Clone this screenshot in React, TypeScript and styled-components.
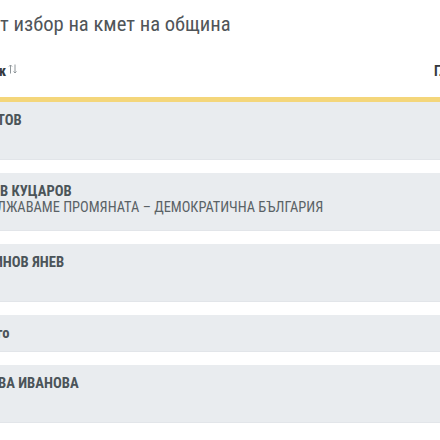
import React from "react";
import styled, { createGlobalStyle } from "styled-components";

const Global = createGlobalStyle`
  html, body { margin: 0; padding: 0; background: #ffffff; overflow: hidden; }
  body { font-family: "Roboto Condensed", Roboto, "Liberation Sans", sans-serif; }
`;

const Page = styled.div`
  width: 440px;
  height: 440px;
  overflow: hidden;
  display: flex;
  flex-direction: column;
`;

const Title = styled.h1`
  margin: 10px 0 0;
  font-size: 20.6px;
  line-height: 28px;
  font-weight: 400;
  color: #505559;
  white-space: nowrap;
`;

const Header = styled.div`
  display: grid;
  grid-template-columns: 434px 140px;
  padding: 24px 0 17px;
  line-height: 18px;
  font-size: 14px;
  font-weight: 700;
  color: #343a3e;
  white-space: nowrap;
`;

const HeadCell = styled.div<{ $cut?: number }>`
  display: flex;
  align-items: center;
  gap: 2px;
  margin-left: ${(p) => -(p.$cut ?? 0)}px;
`;

const SortIcon = styled.svg`
  width: 10px;
  height: 10px;
  transform: translateY(-2px);
  flex: none;
`;

const Accent = styled.div`
  height: 5px;
  background: #f4d67a;
`;

const List = styled.div`
  display: flex;
  flex-direction: column;
  gap: 13px;
`;

const Row = styled.div<{ $compact?: boolean }>`
  height: ${(p) => (p.$compact ? 37 : 58)}px;
  box-sizing: border-box;
  padding-top: 9px;
  background: #e9ecef;
  border-bottom: 1px solid #e2e5e9;
  overflow: hidden;
  white-space: nowrap;
`;

const Name = styled.div<{ $cut?: number }>`
  margin-left: ${(p) => -(p.$cut ?? 0)}px;
  font-size: 14.6px;
  line-height: 18px;
  font-weight: 700;
  color: #4b5459;
`;

const Party = styled.div<{ $cut?: number }>`
  margin-left: ${(p) => -(p.$cut ?? 0)}px;
  font-size: 14.4px;
  line-height: 16px;
  font-weight: 400;
  color: #5a6266;
`;

type Cand = { name: string; cut: number; party?: string; partyCut?: number; compact?: boolean };

const candidates: Cand[] = [
  { name: "ТОВ", cut: 3, party: "" },
  { name: "В КУЦАРОВ", cut: 0, party: "ЛЖАВАМЕ ПРОМЯНАТА – ДЕМОКРАТИЧНА БЪЛГАРИЯ", partyCut: 3 },
  { name: "ИНОВ ЯНЕВ", cut: 6, party: "" },
  { name: "го", cut: 3, compact: true },
  { name: "ВА ИВАНОВА", cut: 2, party: "" },
];

export default function App() {
  return (
    <>
      <Global />
      <Page>
        <Title>т избор на кмет на община</Title>
        <Header>
          <HeadCell $cut={1}>
            к
            <SortIcon viewBox="0 0 10 10" fill="none" stroke="#8f969a" strokeWidth="1">
              <path d="M2.5 9.5V1M1 2.5L2.5 1L4 2.5" />
              <path d="M7 0.5V9M5.5 7.5L7 9L8.5 7.5" />
            </SortIcon>
          </HeadCell>
          <HeadCell>Гласове</HeadCell>
        </Header>
        <Accent />
        <List>
          {candidates.map((c) => (
            <Row key={c.name} $compact={c.compact}>
              <Name $cut={c.cut}>{c.name}</Name>
              {!c.compact && <Party $cut={c.partyCut}>{c.party}</Party>}
            </Row>
          ))}
        </List>
      </Page>
    </>
  );
}
